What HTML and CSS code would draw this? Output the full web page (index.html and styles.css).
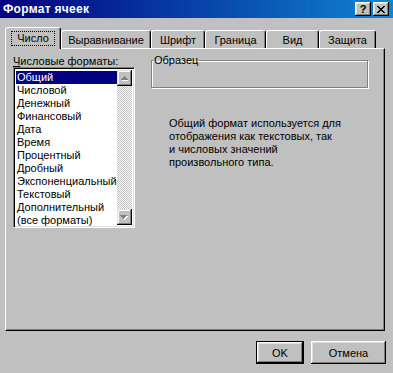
FILE: index.html
```html
<!doctype html>
<html>
  <head>
    <meta name="viewport" content="width=device-width, initial-scale=1">
    <link rel="stylesheet" href="styles.css">
    <title>Формат ячеек</title>
  </head>
  <body>
    <div class="dialog">
      <div class="titlebar">
        <span class="title">Формат ячеек</span>
        <div class="caption-buttons">
          <button class="cap-btn help">?</button>
          <button class="cap-btn close">
            <svg width="8" height="7" viewBox="0 0 8 7" shape-rendering="crispEdges">
              <path d="M0 0h2v1h-2zM6 0h2v1h-2zM1 1h2v1h-2zM5 1h2v1h-2zM2 2h4v1h-4zM3 3h2v1h-2zM2 4h4v1h-4zM1 5h2v1h-2zM5 5h2v1h-2zM0 6h2v1h-2zM6 6h2v1h-2z" fill="#000"/>
            </svg>
          </button>
        </div>
      </div>

      <div class="tabs">
        <div class="tab active" style="width:56px"><span class="focus">Число</span></div>
        <div class="tab" style="width:90px">Выравнивание</div>
        <div class="tab" style="width:54px">Шрифт</div>
        <div class="tab" style="width:61px">Граница</div>
        <div class="tab" style="width:53px">Вид</div>
        <div class="tab" style="width:57px">Защита</div>
      </div>

      <div class="panel">
        <div class="left">
          <div class="label"><u>Ч</u>исловые форматы:</div>
          <div class="listbox">
            <ul class="items">
              <li class="selected">Общий</li>
              <li>Числовой</li>
              <li>Денежный</li>
              <li>Финансовый</li>
              <li>Дата</li>
              <li>Время</li>
              <li>Процентный</li>
              <li>Дробный</li>
              <li>Экспоненциальный</li>
              <li>Текстовый</li>
              <li>Дополнительный</li>
              <li>(все форматы)</li>
            </ul>
            <div class="scrollbar">
              <div class="sb-btn">
                <svg width="7" height="5" viewBox="0 0 7 5" shape-rendering="crispEdges">
                  <path d="M4 1h1v1h1v1h1v1h-6v-1h1zM1 4h7v1h-7z" fill="#fff"/>
                  <path d="M3 0h1v1h1v1h1v1h1v1h-7v-1h1v-1h1v-1h1z" fill="#808080"/>
                </svg>
              </div>
              <div class="sb-track"></div>
              <div class="sb-btn">
                <svg width="8" height="5" viewBox="0 0 8 5" shape-rendering="crispEdges">
                  <path d="M1 1h7v1h-1v1h-1v1h-1v1h-1v-1h-1v-1h-1v-1h-1z" fill="#fff"/>
                  <path d="M0 0h7v1h-1v1h-1v1h-1v1h-1v-1h-1v-1h-1v-1h-1z" fill="#808080"/>
                </svg>
              </div>
            </div>
          </div>
        </div>

        <div class="right">
          <fieldset class="sample">
            <legend>Образец</legend>
          </fieldset>
          <p class="desc">
            Общий формат используется для<br>
            отображения как текстовых, так<br>
            и числовых значений<br>
            произвольного типа.
          </p>
        </div>
      </div>

      <div class="actions">
        <button class="btn default">OK</button>
        <button class="btn">Отмена</button>
      </div>
    </div>
  </body>
</html>
```

FILE: styles.css
```css
body {
  margin: 0;
  background: #c0c0c0;
  font-family: "Liberation Sans", Arial, sans-serif;
  font-size: 11px;
  color: #000;
}

.dialog {
  width: 393px;
  height: 373px;
  overflow: hidden;
}

.titlebar {
  height: 18px;
  display: flex;
  align-items: center;
  justify-content: space-between;
  padding: 0 4px 0 3px;
  background: linear-gradient(to right, #000080, #1084d0);
}

.title {
  color: #fff;
  font-weight: bold;
  font-size: 12px;
  letter-spacing: 0.3px;
}

.caption-buttons {
  display: flex;
  gap: 2px;
}

.cap-btn {
  width: 16px;
  height: 14px;
  padding: 0;
  border: none;
  background: #c0c0c0;
  box-shadow: inset -1px -1px #000, inset 1px 1px #fff, inset -2px -2px #808080, inset 2px 2px #dfdfdf;
  font-family: "Liberation Sans", Arial, sans-serif;
  font-weight: bold;
  font-size: 11px;
  line-height: 12px;
  display: flex;
  align-items: center;
  justify-content: center;
}

.tabs {
  display: flex;
  align-items: flex-end;
  height: 21px;
  margin-top: 9px;
  padding-left: 5px;
}

.tab {
  height: 18px;
  box-sizing: border-box;
  border: 1px solid;
  border-color: #fff #000 transparent #fff;
  border-bottom: none;
  border-radius: 3px 3px 0 0;
  box-shadow: inset -1px 0 #808080;
  display: flex;
  align-items: center;
  justify-content: center;
  padding-top: 1px;
}

.tab.active {
  height: 22px;
  margin-bottom: -1px;
  position: relative;
  z-index: 1;
  background: #c0c0c0;
  padding-top: 0;
}

.focus {
  outline: 1px dotted #000;
  padding: 0 5px;
  line-height: 13px;
}

.panel {
  width: 380px;
  height: 283px;
  margin-left: 5px;
  box-sizing: border-box;
  border: 1px solid;
  border-color: #fff #000 #000 #fff;
  box-shadow: inset -1px -1px #808080;
  display: flex;
  padding: 6px 0 0 7px;
}

.left {
  width: 122px;
}

.label {
  line-height: 12px;
}

.listbox {
  height: 161px;
  box-sizing: border-box;
  border: 1px solid;
  border-color: #808080 #fff #fff #808080;
  box-shadow: inset 1px 1px #000, inset -1px -1px #dfdfdf;
  background: #fff;
  display: flex;
  padding: 2px;
  overflow: hidden;
}

.items {
  flex: 1;
  list-style: none;
  margin: 0;
  padding: 1px 0 0 0;
  white-space: nowrap;
}

.items li {
  height: 13px;
  line-height: 13px;
  padding-left: 1px;
}

.items li.selected {
  background: #000080;
  color: #fff;
}

.scrollbar {
  width: 16px;
  display: flex;
  flex-direction: column;
}

.sb-btn {
  height: 16px;
  background: #c0c0c0;
  box-shadow: inset -1px -1px #000, inset 1px 1px #dfdfdf, inset -2px -2px #808080, inset 2px 2px #fff;
  display: flex;
  align-items: center;
  justify-content: center;
}

.sb-track {
  flex: 1;
  background: repeating-conic-gradient(#c0c0c0 0 25%, #fff 0 50%) 0 0 / 2px 2px;
}

.right {
  width: 217px;
  margin-left: 16px;
}

.sample {
  margin: 0;
  padding: 0;
  height: 33px;
  box-sizing: border-box;
  border: 1px solid #808080;
  box-shadow: inset 1px 1px #fff, 1px 1px #fff;
}

.sample legend {
  padding: 0 1px;
  margin-left: 1px;
  line-height: 11px;
}

.desc {
  margin: 29px 0 0 18px;
  line-height: 13px;
}

.actions {
  display: flex;
  justify-content: flex-end;
  gap: 7px;
  margin-top: 10px;
  padding-right: 7px;
}

.btn {
  width: 75px;
  height: 23px;
  padding: 0;
  border: none;
  background: #c0c0c0;
  font-family: "Liberation Sans", Arial, sans-serif;
  font-size: 11px;
  color: #000;
  box-shadow: inset -1px -1px #000, inset 1px 1px #fff, inset -2px -2px #808080, inset 2px 2px #dfdfdf;
}

.btn.default {
  width: 48px;
  box-shadow: inset 0 0 0 1px #000, inset -2px -2px #000, inset 2px 2px #fff, inset -3px -3px #808080, inset 3px 3px #dfdfdf;
}
```
